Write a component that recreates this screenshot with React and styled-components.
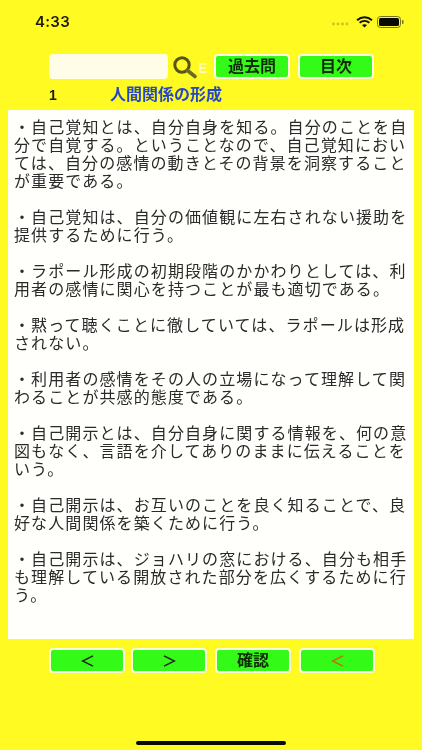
import React from "react";
import styled, { createGlobalStyle } from "styled-components";

const Global = createGlobalStyle`
  html, body { margin: 0; padding: 0; background: #fffa22; }
  body { font-family: "Liberation Sans", "Noto Sans CJK JP", sans-serif; }
`;
const Page = styled.div`
  width: 422px; height: 750px; overflow: hidden; background: #fffa22;
  display: flex; flex-direction: column; position: relative;
  filter: blur(0.3px);
`;
const StatusBar = styled.div`
  height: 54px; flex: none; display: flex; align-items: center; justify-content: space-between;
  padding: 0 18px 10px 35px; box-sizing: border-box;
`;
const Clock = styled.span`
  font: 600 15px/18px Inter, sans-serif; color: #1c1c10; letter-spacing: 0.3px;
`;
const StatusIcons = styled.div`display: flex; align-items: center; gap: 4px;`;
const Toolbar = styled.div`
  display: flex; align-items: center; padding-left: 49px; height: 25px; flex: none;
`;
const SearchInput = styled.div`
  width: 119px; height: 25px; background: #fffde8; border-radius: 4px; flex: none;
`;
const SearchIcon = styled.svg`width: 26px; height: 24px; margin-left: 4px; flex: none;`;
const Ghost = styled.span`
  font: 700 14px/14px "Liberation Sans", sans-serif; color: #fffdb0; width: 9px; margin-top: 2px; flex: none;
`;
const Button = styled.button`
  width: 76px; height: 25px; box-sizing: border-box; padding: 0; flex: none;
  margin-left: ${p => p.$ml || 0}px;
  background: #33fb17; border: 2.5px solid #fefee0; border-radius: 4px;
  color: #0f2a08;
  font: 700 16px/18px "Liberation Sans", "Noto Sans CJK JP", sans-serif;
  display: flex; align-items: center; justify-content: center;
`;
const TitleRow = styled.div`
  display: flex; align-items: center; height: 20px; margin-top: 6px; padding-left: 49px; flex: none;
`;
const Num = styled.span`
  width: 61px; font: 700 14px/20px "Liberation Sans", sans-serif; color: #1c1c10;
`;
const Title = styled.span`
  font: 700 16px/20px "Liberation Sans", "Noto Sans CJK JP", sans-serif; color: #2648c8;
`;
const Panel = styled.div`
  margin: 5px 8px 0; width: 406px; height: 529px; box-sizing: border-box; background: #fffffc; flex: none;
  padding: 7px 5px 0 6px; color: #2a2a2a;
  font: 400 16px/18px "Noto Sans CJK JP", sans-serif;
  letter-spacing: 1.1px;
`;
const Para = styled.p`margin: 0 0 18px; `;
const BottomBar = styled.div`
  display: flex; padding-left: 49px; margin-top: 9px; flex: none;
`;
const HomeBar = styled.div`
  position: absolute; left: 136px; bottom: 5px; width: 150px; height: 4px; border-radius: 3px; background: #0a0a05;
`;
const Chevron = styled.svg`width: 13px; height: 12px;`;

const paras = [
  "・自己覚知とは、自分自身を知る。自分のことを自分で自覚する。ということなので、自己覚知においては、自分の感情の動きとその背景を洞察することが重要である。",
  "・自己覚知は、自分の価値観に左右されない援助を提供するために行う。",
  "・ラポール形成の初期段階のかかわりとしては、利用者の感情に関心を持つことが最も適切である。",
  "・黙って聴くことに徹していては、ラポールは形成されない。",
  "・利用者の感情をその人の立場になって理解して関わることが共感的態度である。",
  "・自己開示とは、自分自身に関する情報を、何の意図もなく、言語を介してありのままに伝えることをいう。",
  "・自己開示は、お互いのことを良く知ることで、良好な人間関係を築くために行う。",
  "・自己開示は、ジョハリの窓における、自分も相手も理解している開放された部分を広くするために行う。",
];

const Arrow = ({ dir, color = "#222" }) => (
  <Chevron viewBox="0 0 13 12" fill="none" stroke={color} strokeWidth="1.5">
    <path d={dir === "l" ? "M12 0.8 L1.5 6 L12 11.2" : "M1 0.8 L11.5 6 L1 11.2"} />
  </Chevron>
);

export default function App() {
  return (
    <Page>
      <Global />
      <StatusBar>
        <Clock>4:33</Clock>
        <StatusIcons>
          <svg width="20" height="10" viewBox="0 0 20 10"><g fill="#c8c420">
            <circle cx="1.5" cy="7" r="1.4" /><circle cx="6" cy="7" r="1.4" /><circle cx="10.5" cy="7" r="1.4" /><circle cx="15" cy="7" r="1.4" />
          </g></svg>
          <svg width="17" height="12" viewBox="0 0 17 12" fill="none" stroke="#111" strokeWidth="1.9">
            <path d="M1 4.2 C5.5 0.2 11.5 0.2 16 4.2" />
            <path d="M3.6 6.8 C6.5 4.4 10.5 4.4 13.4 6.8" />
            <path d="M8.5 11.5 L6 9 C7.3 7.9 9.7 7.9 11 9 Z" fill="#111" stroke="none" />
          </svg>
          <svg width="27" height="12" viewBox="0 0 27 12">
            <rect x="0.5" y="0.5" width="23" height="11" rx="3" fill="none" stroke="#77751a" />
            <rect x="2" y="2" width="20" height="8" rx="1.6" fill="#0a0a05" />
            <rect x="25" y="4" width="1.5" height="4" rx="0.7" fill="#77751a" />
          </svg>
        </StatusIcons>
      </StatusBar>
      <Toolbar>
        <SearchInput />
        <SearchIcon viewBox="0 0 26 24" fill="none">
          <circle cx="10" cy="10" r="7.2" stroke="#55551a" strokeWidth="3" />
          <path d="M15.5 15.5 L23 21.5" stroke="#6e6a20" strokeWidth="3.6" strokeLinecap="round" />
        </SearchIcon>
        <Ghost>E</Ghost>
        <Button $ml={7}>過去問</Button>
        <Button $ml={8}>目次</Button>
      </Toolbar>
      <TitleRow>
        <Num>1</Num>
        <Title>人間関係の形成</Title>
      </TitleRow>
      <Panel>
        {paras.map(t => <Para key={t}>{t}</Para>)}
      </Panel>
      <BottomBar>
        <Button><Arrow dir="l" /></Button>
        <Button $ml={6}><Arrow dir="r" /></Button>
        <Button $ml={8}>確認</Button>
        <Button $ml={8}><Arrow dir="l" color="#c86a10" /></Button>
      </BottomBar>
      <HomeBar />
    </Page>
  );
}
